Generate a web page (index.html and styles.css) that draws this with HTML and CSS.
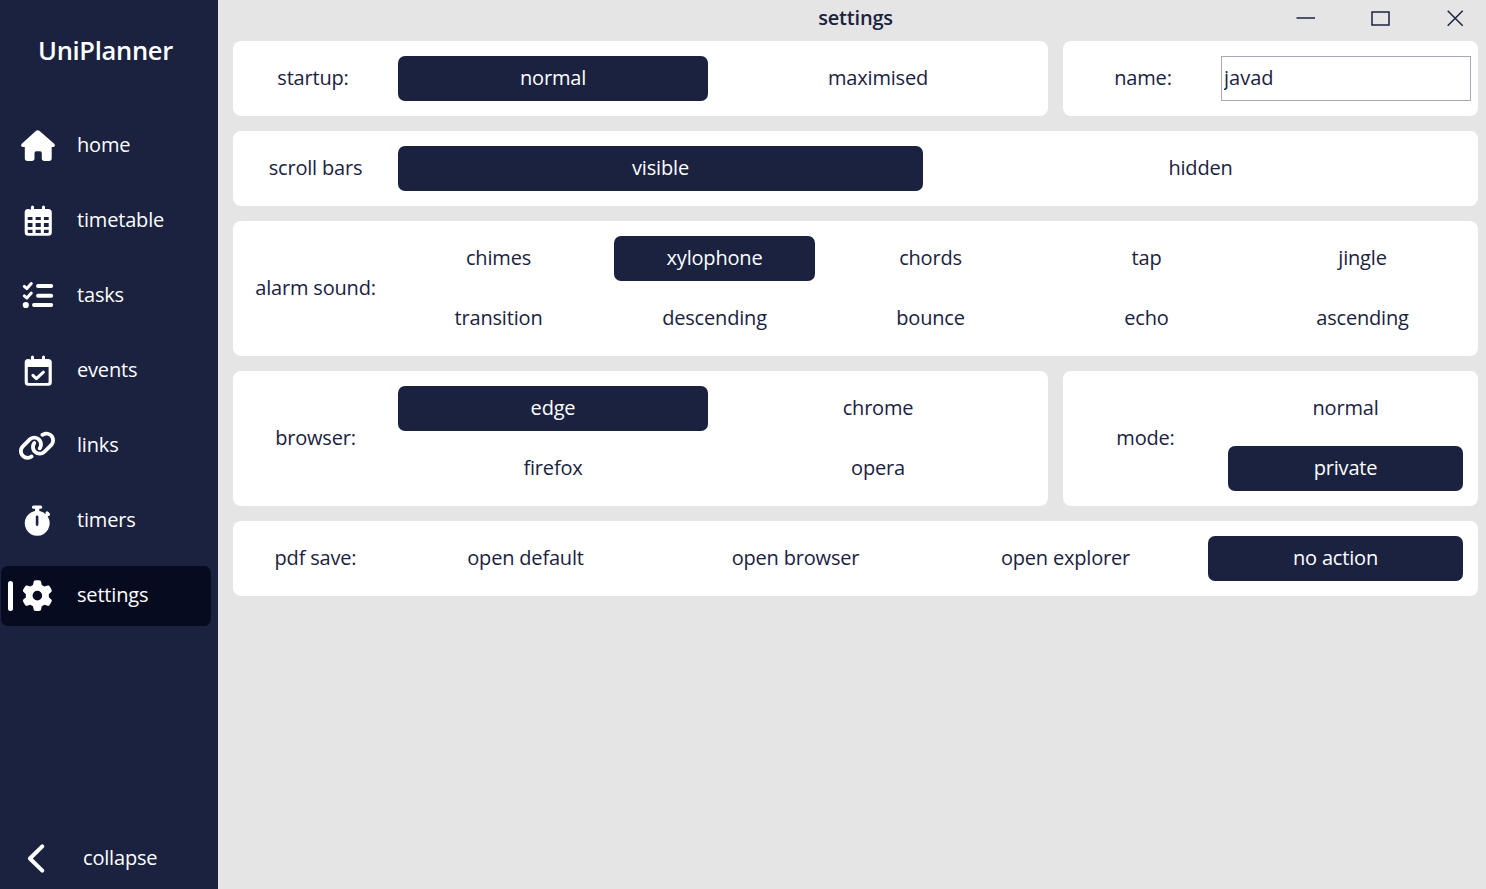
FILE: index.html
```html
<!DOCTYPE html>
<html lang="en">
<head>
<meta charset="utf-8">
<title>UniPlanner</title>
<link rel="stylesheet" href="styles.css">
</head>
<body>
<div class="app">
  <aside class="sidebar">
    <h1 class="brand">UniPlanner</h1>
    <nav class="nav">
      <a class="nav-item">
        <svg class="icon" viewBox="0 0 44 40"><path d="M19.8 5q1.9-1.5 3.8 0l14.6 12.8q1.200 1.200.6 2.300-.6 1-1.600 1h-1.500v11.200q0 2.700-2.700 2.700h-4.500q-2.700 0-2.700-2.700v-5.300q0-1.700-1.700-1.700h-3.900q-1.700 0-1.700 1.700v5.300q0 2.700-2.700 2.700h-4.300q-2.700 0-2.700-2.700v-11.200h-1.900q-1.200 0-1.700-1-.5-1.200.6-2.300z"/></svg>
        <span>home</span>
      </a>
      <a class="nav-item">
        <svg class="icon" viewBox="0 0 44 40"><path fill-rule="evenodd" d="M15 8.500v-2.500a1.500 1.500 0 0 1 3 0v2h8v-2a1.500 1.500 0 0 1 3 0v2h3.300q3.500 0 3.500 3.500v19.700q0 3.500-3.500 3.500h-20.100q-3.500 0-3.500-3.500v-19.700q0-3.300 3.300-3.500zM11.700 16v3h4.800v-3zM19.600 16v3h5.200v-3zM27.900 16v3h4.800v-3zM11.700 22v4h4.800v-4zM19.600 22v4h5.200v-4zM27.900 22v4h4.800v-4zM11.700 28.800v2.200q0 1 1 1h3.800v-3.200zM19.600 28.800v3.200h5.200v-3.200zM27.900 28.800v3.200h3.800q1 0 1-1v-2.200z"/></svg>
        <span>timetable</span>
      </a>
      <a class="nav-item">
        <svg class="icon" viewBox="0 0 44 40"><path class="bar" d="M22 10h13.200M22 19.700h13.200M18 29h17.200"/><path class="tick" d="M8.300 10.400l2.600 2.200 4.400-5M8.300 19.900l2.600 2.200 4.400-5"/><circle cx="9.800" cy="29" r="3.100"/></svg>
        <span>tasks</span>
      </a>
      <a class="nav-item">
        <svg class="icon" viewBox="0 0 44 40"><path fill-rule="evenodd" d="M15 8.500v-2.500a1.500 1.500 0 0 1 3 0v2h8v-2a1.500 1.500 0 0 1 3 0v2h3.300q3.500 0 3.500 3.500v19.700q0 3.500-3.500 3.500h-20.100q-3.500 0-3.500-3.500v-19.700q0-3.300 3.300-3.500zM11.800 16v15q0 1 1 1h18.800q1 0 1-1v-15z"/><path class="tick" d="M16.900 24.300l3.500 3.400 7-6.500"/></svg>
        <span>events</span>
      </a>
      <a class="nav-item">
        <svg class="icon" viewBox="0 0 44 40"><path transform="translate(1.930 4.450) scale(.0596)" d="M579.8 267.7c56.5-56.5 56.5-148 0-204.500c-50-50-128.800-56.500-186.300-15.400l-1.600 1.100c-14.400 10.300-17.700 30.300-7.400 44.600s30.300 17.700 44.600 7.400l1.600-1.100c32.100-22.900 76-19.300 103.800 8.600c31.500 31.500 31.500 82.500 0 114L422.300 334.800c-31.500 31.500-82.500 31.500-114 0c-27.900-27.900-31.500-71.800-8.600-103.800l1.100-1.600c10.300-14.400 6.900-34.400-7.400-44.600s-34.400-6.900-44.600 7.400l-1.100 1.600C206.500 251.200 213 330 263 380c56.500 56.500 148 56.500 204.500 0L579.800 267.700zM60.200 244.300c-56.500 56.500-56.500 148 0 204.500c50 50 128.800 56.500 186.300 15.400l1.600-1.100c14.400-10.300 17.700-30.300 7.400-44.600s-30.300-17.700-44.600-7.400l-1.600 1.100c-32.100 22.900-76 19.300-103.800-8.600C74 372 74 321 105.500 289.500L217.700 177.200c31.500-31.500 82.500-31.500 114 0c27.900 27.900 31.500 71.800 8.600 103.900l-1.100 1.600c-10.300 14.400-6.900 34.400 7.400 44.600s34.400 6.900 44.600-7.400l1.100-1.600C433.500 260.800 427 182 377 132c-56.500-56.500-148-56.500-204.500 0L60.200 244.300z"/></svg>
        <span>links</span>
      </a>
      <a class="nav-item">
        <svg class="icon" viewBox="0 0 44 40"><rect x="16" y="4.500" width="10.200" height="3.300" rx="1.600"/><rect x="19" y="6" width="4.300" height="6"/><path class="tick" d="M29.500 15.500l2.300-2.600"/><path class="tick" d="M31 11.900l1.500 1.500"/><path fill-rule="evenodd" d="M21.200 9.800a12.500 12.500 0 1 0 .01 0zM19.800 15.800a1.300 1.300 0 0 1 2.600 0v7.800a1.300 1.300 0 0 1-2.600 0z"/></svg>
        <span>timers</span>
      </a>
      <a class="nav-item active">
        <svg class="icon" viewBox="0 0 44 40"><path transform="translate(6 4.300) scale(.06)" d="M495.900 166.600c3.200 8.700 .5 18.400-6.400 24.600l-43.300 39.400c1.100 8.300 1.700 16.800 1.700 25.400s-.6 17.100-1.700 25.400l43.300 39.400c6.900 6.200 9.600 15.900 6.400 24.600c-4.400 11.900-9.700 23.300-15.800 34.300l-4.700 8.100c-6.600 11-14 21.400-22.100 31.200c-5.900 7.200-15.700 9.600-24.500 6.800l-55.700-17.700c-13.400 10.300-28.200 18.900-44 25.400l-12.500 57.100c-2 9.100-9 16.300-18.200 17.800c-13.800 2.300-28 3.500-42.500 3.500s-28.700-1.200-42.500-3.500c-9.200-1.500-16.200-8.700-18.200-17.800l-12.500-57.100c-15.800-6.500-30.600-15.100-44-25.400L83.100 425.900c-8.800 2.800-18.600 .3-24.500-6.800c-8.100-9.800-15.500-20.200-22.100-31.200l-4.700-8.100c-6.100-11-11.400-22.400-15.800-34.300c-3.200-8.700-.5-18.400 6.400-24.600l43.300-39.400C64.600 273.100 64 264.600 64 256s.6-17.100 1.700-25.400L22.400 191.200c-6.900-6.200-9.600-15.900-6.400-24.600c4.400-11.900 9.700-23.300 15.800-34.300l4.700-8.100c6.600-11 14-21.400 22.100-31.200c5.900-7.200 15.700-9.600 24.500-6.800l55.700 17.700c13.400-10.300 28.200-18.900 44-25.400l12.500-57.100c2-9.100 9-16.300 18.200-17.800C227.300 1.200 241.500 0 256 0s28.700 1.200 42.500 3.500c9.200 1.500 16.200 8.700 18.200 17.800l12.500 57.100c15.800 6.500 30.600 15.100 44 25.400l55.700-17.700c8.800-2.800 18.600-.3 24.500 6.800c8.100 9.800 15.500 20.200 22.100 31.200l4.700 8.100c6.100 11 11.400 22.400 15.800 34.300zM256 336a80 80 0 1 0 0-160 80 80 0 1 0 0 160z"/></svg>
        <span>settings</span>
      </a>
    </nav>
    <a class="collapse">
      <svg class="icon" viewBox="0 0 44 40"><path class="chevron" d="M26.300 8.400L13.900 20.500l12.400 12.100"/></svg>
      <span>collapse</span>
    </a>
  </aside>
  <main class="main">
    <header class="titlebar">
      <h2 class="title">settings</h2>
      <div class="controls">
        <svg class="control" viewBox="0 0 75 36"><path d="M28.500 18h18.500"/></svg>
        <svg class="control" viewBox="0 0 75 36"><rect x="29" y="12" width="17" height="13"/></svg>
        <svg class="control" viewBox="0 0 75 36"><path d="M29.700 10.700l15 15M44.700 10.700l-15 15"/></svg>
      </div>
    </header>
    <div class="rows">
      <div class="split">
        <section class="card narrow-label">
          <span class="label">startup:</span>
          <div class="options cols-2"><button class="option selected">normal</button><button class="option">maximised</button></div>
        </section>
        <section class="card name-card">
          <span class="label">name:</span>
          <input class="name-input" value="javad">
        </section>
      </div>
      <section class="card">
        <span class="label">scroll bars</span>
        <div class="options cols-2"><button class="option selected">visible</button><button class="option">hidden</button></div>
      </section>
      <section class="card">
        <span class="label">alarm sound:</span>
        <div class="options cols-5">
          <button class="option">chimes</button><button class="option selected">xylophone</button><button class="option">chords</button><button class="option">tap</button><button class="option">jingle</button>
          <button class="option">transition</button><button class="option">descending</button><button class="option">bounce</button><button class="option">echo</button><button class="option">ascending</button>
        </div>
      </section>
      <div class="split">
        <section class="card">
          <span class="label">browser:</span>
          <div class="options cols-2"><button class="option selected">edge</button><button class="option">chrome</button><button class="option">firefox</button><button class="option">opera</button></div>
        </section>
        <section class="card">
          <span class="label">mode:</span>
          <div class="options"><button class="option">normal</button><button class="option selected">private</button></div>
        </section>
      </div>
      <section class="card">
        <span class="label">pdf save:</span>
        <div class="options cols-4"><button class="option">open default</button><button class="option">open browser</button><button class="option">open explorer</button><button class="option selected">no action</button></div>
      </section>
    </div>
  </main>
</div>
</body>
</html>
```

FILE: styles.css
```css
* { box-sizing: border-box; }

body {
  margin: 0;
  font: 20px/28px "Open Sans", "Noto Sans", sans-serif;
  letter-spacing: -0.18px;
  color: #1a223f;
}

h1, h2 { margin: 0; font-weight: 600; }

.app {
  display: flex;
  width: 100vw;
  height: 100vh;
  overflow: hidden;
  background: #e5e5e5;
}

.sidebar {
  display: flex;
  flex-direction: column;
  width: 218px;
  flex: none;
  background: #1a223f;
  color: #fff;
}

.brand {
  height: 116px;
  padding: 32px 0 0 38px;
  font-size: 25.5px;
  line-height: 36px;
  letter-spacing: -0.3px;
}

.nav {
  display: flex;
  flex-direction: column;
  gap: 15px;
  padding: 0 7px 0 1px;
}

.nav-item {
  display: flex;
  align-items: center;
  gap: 17px;
  height: 60px;
  padding-left: 15px;
  border-radius: 7px;
}

.nav-item span { padding-bottom: 3px; }

.nav-item.active { background: #060b20; }

.nav-item.active::before {
  content: "";
  width: 5px;
  height: 30px;
  margin: 0 -14px 0 -8px;
  border-radius: 2.5px;
  background: #fff;
}

.icon { width: 44px; height: 40px; flex: none; fill: #fff; }

.bar, .tick, .chevron {
  fill: none;
  stroke: #fff;
  stroke-linecap: round;
  stroke-linejoin: round;
}
.bar { stroke-width: 3.9; }
.tick { stroke-width: 3; }
.chevron { stroke-width: 4; }

.collapse {
  display: flex;
  align-items: center;
  gap: 23px;
  height: 62px;
  margin-top: auto;
  padding-left: 16px;
}
.collapse span { padding-bottom: 1px; }

.main { flex: 1; min-width: 0; padding: 0 8px 0 15px; }

.titlebar {
  display: grid;
  grid-template-columns: 1fr auto 1fr;
  height: 41px;
}

.title {
  grid-column: 2;
  font-size: 20px;
  line-height: 35px;
}

.controls { display: flex; justify-content: flex-end; margin-right: -15px; }

.control {
  width: 75px;
  height: 36px;
  fill: none;
  stroke: #1a223f;
  stroke-width: 1.5;
}

.rows { display: flex; flex-direction: column; gap: 15px; }

.split { display: grid; grid-template-columns: 815px 1fr; gap: 15px; }

.card {
  display: grid;
  grid-template-columns: 135px 1fr;
  gap: 15px;
  align-items: center;
  padding: 15px;
  border-radius: 8px;
  background: #fff;
}

.narrow-label { grid-template-columns: 130px 1fr; gap: 20px; }

.name-card {
  grid-template-columns: 130px 250px;
  gap: 13px;
  padding-right: 7px;
}

.label { padding-bottom: 2px; text-align: center; white-space: nowrap; }

.options { display: grid; gap: 15px; }
.cols-2 { grid-template-columns: repeat(2, 1fr); }
.cols-4 { grid-template-columns: repeat(4, 1fr); }
.cols-5 { grid-template-columns: repeat(5, 1fr); }

.option {
  height: 45px;
  padding: 0 0 1px;
  border: 0;
  border-radius: 7px;
  background: transparent;
  color: inherit;
  font: inherit;
  letter-spacing: inherit;
}
.option.selected { background: #1a223f; color: #fff; }

.name-input {
  width: 250px;
  height: 45px;
  padding: 0 2px 3px;
  border: 1px solid #a9a9b3;
  outline: 0;
  background: #fff;
  color: inherit;
  font: inherit;
}
```
